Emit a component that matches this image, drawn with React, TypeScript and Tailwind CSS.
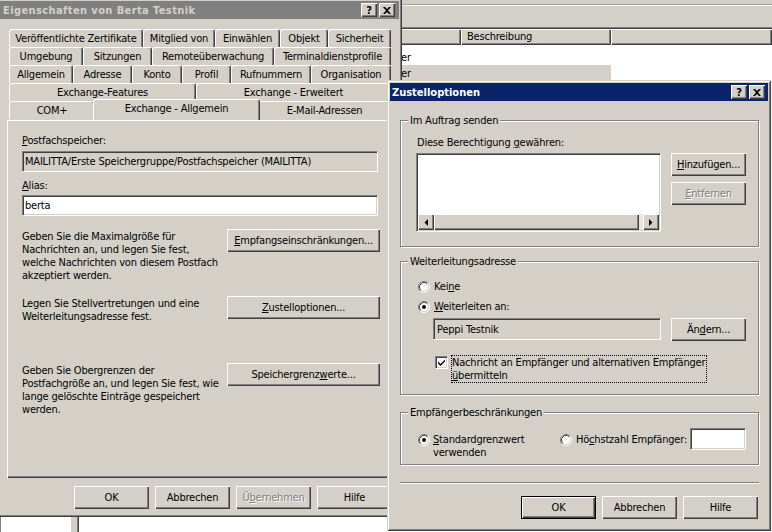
import type { ReactNode } from "react";

// classic 3D edges
const RAISED = "shadow-[inset_1px_1px_0_#fff,inset_-1px_-1px_0_#404040,inset_-2px_-2px_0_#808080]";
const SUNKEN =
  "border border-t-[#808080] border-l-[#808080] border-b-white border-r-white shadow-[inset_1px_1px_0_#404040,inset_-1px_-1px_0_#d4d0c8]";
const FRAME =
  "shadow-[inset_1px_1px_0_#d4d0c8,inset_-1px_-1px_0_#404040,inset_2px_2px_0_#fff,inset_-2px_-2px_0_#808080]";
const GROUP = "border border-[#808080] p-0 shadow-[inset_1px_1px_0_#fff,1px_1px_0_#fff]";

const TAB_ROWS: { label: string; w: string }[][] = [
  [
    { label: "Veröffentlichte Zertifikate", w: "w-[134px]" },
    { label: "Mitglied von", w: "w-[72px]" },
    { label: "Einwählen", w: "w-[65px]" },
    { label: "Objekt", w: "w-[48px]" },
    { label: "Sicherheit", w: "w-[63px]" },
  ],
  [
    { label: "Umgebung", w: "w-[74px]" },
    { label: "Sitzungen", w: "w-[69px]" },
    { label: "Remoteüberwachung", w: "w-[122px]" },
    { label: "Terminaldienstprofile", w: "w-[117px]" },
  ],
  [
    { label: "Allgemein", w: "w-[64px]" },
    { label: "Adresse", w: "w-[59px]" },
    { label: "Konto", w: "w-[50px]" },
    { label: "Profil", w: "w-[49px]" },
    { label: "Rufnummern", w: "w-[80px]" },
    { label: "Organisation", w: "w-[80px]" },
  ],
  [
    { label: "Exchange-Features", w: "w-[187px]" },
    { label: "Exchange - Erweitert", w: "w-[195px]" },
  ],
];

function Key({ children }: { children: ReactNode }) {
  return <span className="underline decoration-1 underline-offset-[1px]">{children}</span>;
}

function Button({
  children,
  disabled = false,
  primary = false,
  className = "",
}: {
  children: ReactNode;
  disabled?: boolean;
  primary?: boolean;
  className?: string;
}) {
  return (
    <button
      type="button"
      className={`flex h-[23px] w-[75px] shrink-0 items-center justify-center whitespace-nowrap bg-[#d4d0c8] ${RAISED} ${
        primary ? "border border-black" : ""
      } ${disabled ? "text-[#808080] [text-shadow:1px_1px_0_#fff]" : ""} ${className}`}
    >
      {children}
    </button>
  );
}

function CaptionButtons() {
  return (
    <div className="ml-auto flex gap-[2px]">
      <span
        className={`flex h-[14px] w-[16px] items-center justify-center bg-[#d4d0c8] text-[11px] font-bold leading-none tracking-normal text-black ${RAISED}`}
      >
        ?
      </span>
      <span className={`flex h-[14px] w-[16px] items-center justify-center bg-[#d4d0c8] ${RAISED}`}>
        <svg width="8" height="7" viewBox="0 0 8 7">
          <path d="M0 0h2l2 2 2-2h2L5 3.5 8 7H6L4 5 2 7H0l3-3.5z" fill="#000" />
        </svg>
      </span>
    </div>
  );
}

function Radio({ checked = false }: { checked?: boolean }) {
  return (
    <svg width="12" height="12" viewBox="0 0 12 12" className="shrink-0">
      <circle cx="6" cy="6" r="4.5" fill="#fff" />
      <path d="M2.11 9.89A5.5 5.5 0 0 1 9.89 2.11" fill="none" stroke="#808080" />
      <path d="M9.89 2.11A5.5 5.5 0 0 1 2.11 9.89" fill="none" stroke="#fff" />
      <path d="M2.82 9.18A4.5 4.5 0 0 1 9.18 2.82" fill="none" stroke="#404040" />
      <path d="M9.18 2.82A4.5 4.5 0 0 1 2.82 9.18" fill="none" stroke="#d4d0c8" />
      {checked && <circle cx="6" cy="6" r="2" fill="#000" />}
    </svg>
  );
}

function Checkbox() {
  return (
    <span className={`flex h-[13px] w-[13px] shrink-0 items-center justify-center bg-white ${SUNKEN}`}>
      <svg width="7" height="7" viewBox="0 0 7 7">
        <path d="M0 2.5L2.5 5 7 0.5v2L2.5 7 0 4.5z" fill="#000" />
      </svg>
    </span>
  );
}

function Tab({ label, w }: { label: string; w: string }) {
  return (
    <div
      className={`flex h-[18px] shrink-0 items-center justify-center whitespace-nowrap rounded-t-[3px] border-l border-r border-t border-l-white border-r-[#404040] border-t-white shadow-[inset_-1px_0_0_#808080] ${w}`}
    >
      {label}
    </div>
  );
}

// the console window behind both dialogs; only its right and bottom edges show
function Background() {
  return (
    <div className="flex h-full flex-col bg-[#d4d0c8]">
      <div className="h-[4px] shrink-0" />
      <div className="h-[23px] shrink-0 border-t border-t-[#a0a0a0] shadow-[inset_0_1px_0_#fff]" />
      <div className="flex min-h-0 flex-1">
        <div className="w-[71px] border-l border-t border-[#808080] bg-white" />
        <div className="w-[6px]" />
        <div className="flex flex-1 flex-col border-l border-t border-[#808080] bg-white">
          <div className="flex flex-1 flex-col border-l border-t border-[#404040]">
            <div className="flex h-[16px] shrink-0 bg-[#d4d0c8]">
              <div className={`w-[281px] ${RAISED}`} />
              <div className={`w-[101px] ${RAISED}`} />
              <div className={`w-[150px] pl-[6px] leading-[16px] ${RAISED}`}>Beschreibung</div>
              <div className={`flex-1 ${RAISED}`} />
            </div>
            <div className="pt-[4px]">
              <div className="flex h-[16px] w-[532px] items-center">
                <div className="w-[322px]" />
                <div>er</div>
              </div>
              <div className="flex h-[16px] w-[532px] items-center bg-[#d4d0c8]">
                <div className="w-[322px]" />
                <div>er</div>
              </div>
            </div>
          </div>
        </div>
      </div>
    </div>
  );
}

function PropertiesDialog() {
  return (
    <div className={`absolute left-[-3px] top-[-2px] flex h-[519px] w-[405px] flex-col bg-[#d4d0c8] p-[3px] ${FRAME}`}>
      <div className="flex h-[18px] shrink-0 items-center bg-[#808080] pl-[3px] pr-[4px]">
        <span className="text-[11px] font-bold tracking-[0.4px] text-[#d4d0c8]">Eigenschaften von Berta Testnik</span>
        <CaptionButtons />
      </div>

      <div className="flex flex-col px-[7px] pt-[10px]">
        <div className="ml-[2px] flex flex-col">
          {TAB_ROWS.map((row, i) => (
            <div key={i} className="flex">
              {row.map((t) => (
                <Tab key={t.label} label={t.label} w={t.w} />
              ))}
            </div>
          ))}
          <div className="flex">
            <Tab label="COM+" w="w-[86px]" />
            <div className="relative z-10 -mx-[2px] -mt-[2px] flex h-[21px] w-[167px] shrink-0 items-start justify-center whitespace-nowrap rounded-t-[3px] border-l border-r border-t border-l-white border-r-[#404040] border-t-white bg-[#d4d0c8] pt-[2px] shadow-[inset_-1px_0_0_#808080]">
              Exchange - Allgemein
            </div>
            <Tab label="E-Mail-Adressen" w="w-[133px]" />
          </div>
        </div>

        <div className={`flex h-[358px] w-[386px] flex-col px-[15px] pt-[14px] ${RAISED}`}>
          <div>
            <Key>P</Key>ostfachspeicher:
          </div>
          <div className={`mt-[4px] flex h-[21px] items-center pl-[2px] ${SUNKEN}`}>
            MAILITTA/Erste Speichergruppe/Postfachspeicher (MAILITTA)
          </div>
          <div className="mt-[7px]">
            <Key>A</Key>lias:
          </div>
          <div className={`mt-[3px] flex h-[21px] items-center bg-white pl-[2px] ${SUNKEN}`}>berta</div>

          <div className="mt-[13px] flex h-[67px]">
            <div className="whitespace-nowrap pt-[1px]">
              Geben Sie die Maximalgröße für
              <br />
              Nachrichten an, und legen Sie fest,
              <br />
              welche Nachrichten von diesem Postfach
              <br />
              akzeptiert werden.
            </div>
            <Button className="-mr-[2px] ml-auto w-[153px]">
              <Key>E</Key>mpfangseinschränkungen...
            </Button>
          </div>
          <div className="flex h-[67px]">
            <div className="whitespace-nowrap pt-[1px]">
              Legen Sie Stellvertretungen und eine
              <br />
              Weiterleitungsadresse fest.
            </div>
            <Button className="-mr-[2px] ml-auto w-[153px]">
              <Key>Z</Key>ustelloptionen...
            </Button>
          </div>
          <div className="flex h-[67px]">
            <div className="whitespace-nowrap pt-[1px]">
              Geben Sie Obergrenzen der
              <br />
              Postfachgröße an, und legen Sie fest, wie
              <br />
              lange gelöschte Einträge gespeichert
              <br />
              werden.
            </div>
            <Button className="-mr-[2px] ml-auto w-[153px]">
              Speichergrenz<Key>w</Key>erte...
            </Button>
          </div>
        </div>

        <div className="mt-[8px] flex justify-end gap-[6px]">
          <Button>OK</Button>
          <Button>Abbrechen</Button>
          <Button disabled>
            Ü<Key>b</Key>ernehmen
          </Button>
          <Button>Hilfe</Button>
        </div>
      </div>
    </div>
  );
}

function ScrollArrow({ dir }: { dir: "left" | "right" }) {
  return (
    <div className={`flex w-[16px] shrink-0 items-center justify-center bg-[#d4d0c8] ${RAISED}`}>
      <svg width="4" height="7" viewBox="0 0 4 7">
        <path d={dir === "left" ? "M4 0v7L0.5 3.5z" : "M0 0v7l3.5-3.5z"} fill="#000" />
      </svg>
    </div>
  );
}

function DeliveryDialog() {
  return (
    <div className={`absolute left-[387px] top-[80px] flex h-[451px] w-[384px] flex-col bg-[#d4d0c8] p-[3px] ${FRAME}`}>
      <div className="flex h-[18px] shrink-0 items-center bg-[#0a246a] pl-[2px] pr-[3px]">
        <span className="text-[11px] font-bold tracking-normal text-white">Zustelloptionen</span>
        <CaptionButtons />
      </div>

      <div className="flex flex-col pl-[10px] pr-[9px]">
        <fieldset className={`mt-[13px] ${GROUP}`}>
          <legend className="ml-[7px] bg-[#d4d0c8] px-[2px]">Im Auftrag senden</legend>
          <div className="pb-[14px] pl-[15px] pt-[9px]">
            <div className="ml-[1px]">
              Diese Berechtigung <Key>g</Key>ewähren:
            </div>
            <div className="mt-[4px] flex">
              <div className={`flex h-[79px] w-[245px] flex-col bg-white p-[1px] ${SUNKEN}`}>
                <div className="flex-1" />
                <div className="flex h-[16px]">
                  <ScrollArrow dir="left" />
                  <div className="flex flex-1 bg-[#e8e6e2]">
                    <div className={`flex-1 bg-[#d4d0c8] ${RAISED}`} />
                    <div className="w-[4px]" />
                  </div>
                  <ScrollArrow dir="right" />
                </div>
              </div>
              <div className="ml-[10px] flex flex-col gap-[6px]">
                <Button>
                  <Key>H</Key>inzufügen...
                </Button>
                <Button disabled>
                  <Key>E</Key>ntfernen
                </Button>
              </div>
            </div>
          </div>
        </fieldset>

        <fieldset className={`mt-[8px] ${GROUP}`}>
          <legend className="ml-[7px] bg-[#d4d0c8] px-[2px]">Weiterleitungsadresse</legend>
          <div className="pb-[11px] pl-[17px]">
            <div className="mt-[12px] flex h-[13px] items-center gap-[4px]">
              <Radio />
              <span>
                Kei<Key>n</Key>e
              </span>
            </div>
            <div className="mt-[7px] flex h-[13px] items-center gap-[4px]">
              <Radio checked />
              <span>
                <Key>W</Key>eiterleiten an:
              </span>
            </div>
            <div className="ml-[15px] mt-[5px] flex">
              <div className={`flex h-[22px] w-[228px] items-center pl-[3px] ${SUNKEN}`}>Peppi Testnik</div>
              <Button className="ml-[10px]">
                Än<Key>d</Key>ern...
              </Button>
            </div>
            <div className="ml-[17px] mt-[14px] flex items-start gap-[3px]">
              <div className="mt-[1px]">
                <Checkbox />
              </div>
              <div className="whitespace-nowrap border border-dotted border-black pr-[1px]">
                Nachricht an Empfänger und alternativen Empfänger
                <br />
                <Key>ü</Key>bermitteln
              </div>
            </div>
          </div>
        </fieldset>

        <fieldset className={`mt-[11px] ${GROUP}`}>
          <legend className="ml-[7px] bg-[#d4d0c8] px-[2px]">Empfängerbeschränkungen</legend>
          <div className="flex items-start pb-[5px] pl-[17px] pr-[12px] pt-[9px]">
            <div className="mt-[5px] flex w-[142px] items-start gap-[3px]">
              <div className="mt-[1px]">
                <Radio checked />
              </div>
              <div className="whitespace-nowrap">
                <Key>S</Key>tandardgrenzwert
                <br />
                verwenden
              </div>
            </div>
            <div className="mt-[5px] flex items-start gap-[4px]">
              <div className="mt-[1px]">
                <Radio />
              </div>
              <span className="whitespace-nowrap">
                Hö<Key>c</Key>hstzahl Empfänger:
              </span>
            </div>
            <div className={`ml-auto h-[22px] w-[56px] bg-white ${SUNKEN}`} />
          </div>
        </fieldset>

        <div className="mt-[17px] h-[2px] border-b border-t border-b-white border-t-[#808080]" />

        <div className="mr-[1px] mt-[12px] flex justify-end gap-[6px]">
          <Button primary>OK</Button>
          <Button>Abbrechen</Button>
          <Button>Hilfe</Button>
        </div>
      </div>
    </div>
  );
}

export default function App() {
  return (
    <div className="relative h-[532px] w-[772px] overflow-hidden font-['DejaVu_Sans_Condensed','Liberation_Sans',sans-serif] text-[11px] leading-[13px] tracking-[-0.2px] text-black">
      <Background />
      <PropertiesDialog />
      <DeliveryDialog />
    </div>
  );
}
